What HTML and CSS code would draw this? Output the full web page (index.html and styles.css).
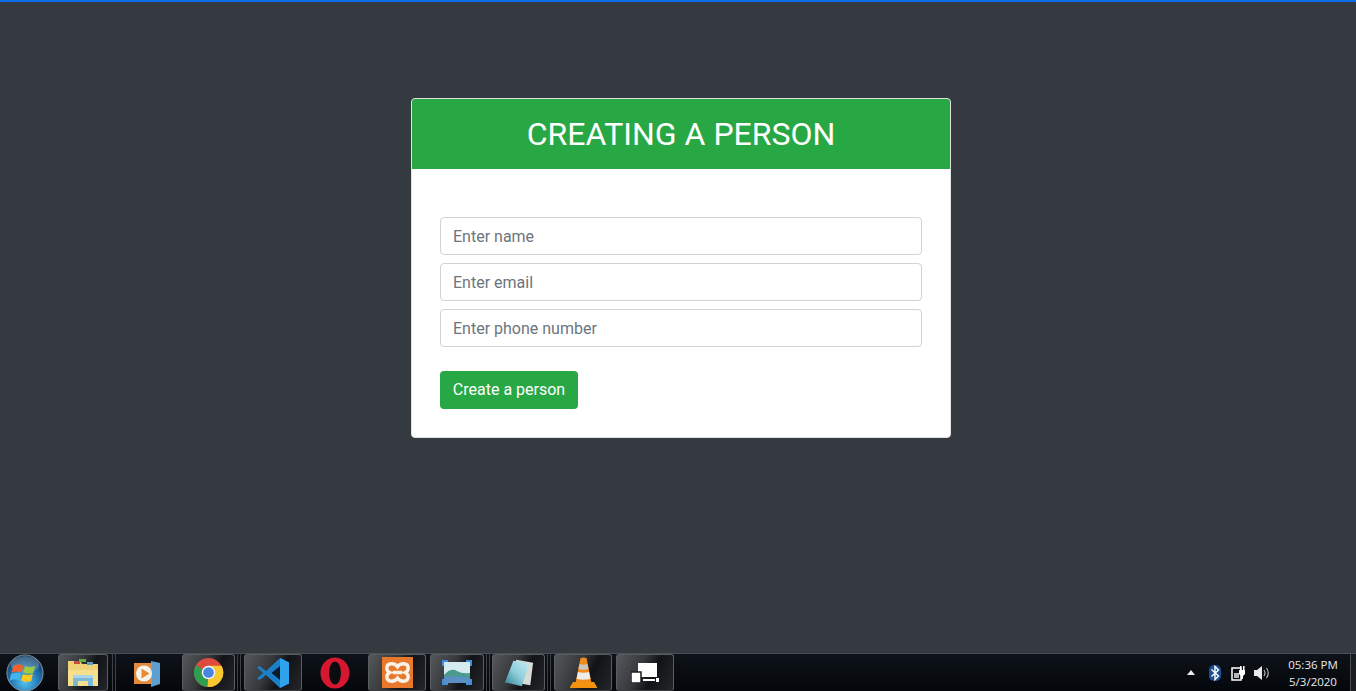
FILE: index.html
```html
<!DOCTYPE html>
<html lang="en">
<head>
    <meta charset="UTF-8">
    <meta name="viewport" content="width=device-width, initial-scale=1.0">
    <title>Creating a person</title>
    <link rel="stylesheet" href="styles.css">
</head>
<body>
    <div class="top-line"></div>

    <main class="page">
        <div class="card">
            <h1 class="card-header">CREATING A PERSON</h1>
            <form class="card-body">
                <input class="field" type="text" placeholder="Enter name">
                <input class="field" type="email" placeholder="Enter email">
                <input class="field" type="text" placeholder="Enter phone number">
                <button class="btn" type="button">Create a person</button>
            </form>
        </div>
    </main>

    <footer class="taskbar">
        <div class="start">
            <svg width="38" height="38" viewBox="0 0 40 40">
                <defs>
                    <radialGradient id="orb" cx="50%" cy="75%" r="75%">
                        <stop offset="0" stop-color="#58c4ec"/>
                        <stop offset="0.5" stop-color="#2478b8"/>
                        <stop offset="1" stop-color="#0a3054"/>
                    </radialGradient>
                </defs>
                <circle cx="20" cy="20" r="19" fill="url(#orb)" stroke="#8c9aa4" stroke-width="1"/>
                <ellipse cx="20" cy="11" rx="15" ry="9" fill="#fff" opacity="0.22"/>
                <g transform="translate(-2.500 -3) scale(1.12)">
                    <path d="M9 14q5-2.500 9.500-.5l-1.500 6.500q-5-2-9.500.5z" fill="#f0632c"/>
                    <path d="M20 14q4.500 2 9.500 0l-1.500 6.500q-5 1.500-9.500-.5z" fill="#9ccc3e"/>
                    <path d="M7 21.500q5-2.500 9.500-.5l-1.500 6.500q-5-2-9.500.5z" fill="#45b4ea"/>
                    <path d="M18 21.500q4.500 2 9.500 0l-1.500 6.500q-5 1.500-9.500-.5z" fill="#fcc81c"/>
                </g>
            </svg>
        </div>

        <div class="task w50">
            <svg width="34" height="30" viewBox="0 0 34 30">
                <path d="M2 7h30v21H2z" fill="#f6e08e"/>
                <path d="M2 3h12l2 3h16v6H2z" fill="#efd177"/>
                <path d="M8 3h6v3H8z" fill="#c94b3d"/>
                <path d="M13 1h7v3h-7z" fill="#6cab4a"/>
                <path d="M21 4h6v3h-6z" fill="#5d9ec9"/>
                <path d="M7 19h20v9h-5v-5H12v5H7z" fill="#7cb8d8"/>
                <path d="M7 17h20v3H7z" fill="#a8d6ea"/>
            </svg>
        </div>
        <div class="sep"></div>
        <div class="plain media">
            <svg width="26" height="27" viewBox="0 0 26 27">
                <path d="M17 1l9 2v21l-9 3z" fill="#5d9fd0"/>
                <path d="M0 3h18v21H0z" fill="#e38b3c"/>
                <circle cx="10" cy="13.500" r="8" fill="#f6f3ee"/>
                <path d="M7.500 8.500l8 5-8 5z" fill="#ea8a2d"/>
            </svg>
        </div>
        <div class="task w53 chrome">
            <svg width="31" height="31" viewBox="0 0 32 32">
                <circle cx="16" cy="16" r="15" fill="#dd4b3e"/>
                <path d="M16 16L3 8.500A15 15 0 0 0 16 31l7.500-13z" fill="#2f9e4f"/>
                <path d="M16 16l-1 15A15 15 0 0 0 29.500 9H16z" fill="#f7c92e"/>
                <circle cx="16" cy="16" r="7" fill="#f3f3f3"/>
                <circle cx="16" cy="16" r="5.500" fill="#4a86e0"/>
            </svg>
        </div>
        <div class="sep-thin"></div>
        <div class="task w58">
            <svg width="34" height="32" viewBox="0 0 34 32">
                <path d="M24 1l9 4.500v21L24 31 10 18l-6.500 5L1 21.500 7 16 1 10.500 3.500 9l6.500 5z" fill="#1b7fc8"/>
                <path d="M24 9l-8.500 7 8.500 7z" fill="#0b1a28"/>
                <path d="M24 1l9 4.500v21L24 31z" fill="#2ea3ec"/>
            </svg>
        </div>
        <div class="plain w66">
            <svg width="30" height="32" viewBox="0 0 30 32">
                <ellipse cx="15" cy="16" rx="14.500" ry="15.500" fill="#d5182f"/>
                <ellipse cx="15" cy="16" rx="6" ry="11.500" fill="#0a0c10"/>
            </svg>
        </div>
        <div class="task w58">
            <svg width="31" height="31" viewBox="0 0 32 32">
                <rect width="32" height="32" fill="#e8792c"/>
                <path d="M10 7q4 0 6 3 2-3 6-3 5 0 5 4.500 0 3-3 4.500 3 1.500 3 4.500 0 4.500-5 4.500-4 0-6-3-2 3-6 3-5 0-5-4.500 0-3 3-4.500-3-1.500-3-4.500Q5 7 10 7zM11 16h10" fill="none" stroke="#fbf3ea" stroke-width="3.500"/>
            </svg>
        </div>
        <div class="task w54 photo">
            <svg width="30" height="25" viewBox="0 0 30 25">
                <rect x="2" y="2" width="26" height="21" fill="#d6ebef"/>
                <path d="M2 15q7-8 13-4 5 3 13 2v10H2z" fill="#4a9a90"/>
                <path d="M2 17q12-2 26 1v5H2z" fill="#5c8fc4"/>
                <path d="M1 6V1h5M24 1h5v5M29 19v5h-5M6 24H1v-5" fill="none" stroke="#3f8fdc" stroke-width="2"/>
            </svg>
        </div>
        <div class="sep-thin narrow"></div>
        <div class="task w53">
            <svg width="32" height="32" viewBox="0 0 34 32">
                <defs>
                    <linearGradient id="pad" x1="0" y1="1" x2="1" y2="0">
                        <stop offset="0" stop-color="#2f7f8e"/>
                        <stop offset="0.5" stop-color="#8fd0dc"/>
                        <stop offset="1" stop-color="#c6ecf0"/>
                    </linearGradient>
                </defs>
                <path d="M14 2l18 3-3 24-17-3z" fill="#d7dcd6"/>
                <path d="M11 3l17 3-8 24-18-4z" fill="url(#pad)"/>
            </svg>
        </div>
        <div class="sep-thin"></div>
        <div class="task w58">
            <svg width="27" height="31" viewBox="0 0 27 31">
                <path d="M10.500 1q3-1 6 0l5 25h-16z" fill="#ef8c1a"/>
                <path d="M9.500 7q4 1.500 8 0l1 5q-5 1.500-10 0z" fill="#c9c7c2"/>
                <path d="M8 15q5.500 1.500 11 0l1.500 7q-7 1.500-14 0z" fill="#eeece8"/>
                <path d="M3 25h21l3 5v1H0v-1z" fill="#f39210"/>
            </svg>
        </div>
        <div class="task w58 remote">
            <svg width="28" height="20" viewBox="0 0 28 20">
                <path d="M7 0h19v14H7z" fill="#fff"/>
                <path d="M25 15h3v4h-3z" fill="#fff"/>
                <path d="M0 9h10v11H0z" fill="#fff" stroke="#1b1d20" stroke-width="1.500"/>
                <path d="M12 16h12v2H12z" fill="#fff"/>
            </svg>
        </div>

        <div class="tray">
            <svg class="tray-arrow" width="8" height="5" viewBox="0 0 8 5"><path d="M4 0l4 5H0z" fill="#e8eaec"/></svg>
            <svg class="tray-bt" width="12" height="16" viewBox="0 0 12 16">
                <rect width="12" height="16" rx="5" fill="#1c4f8f"/>
                <path d="M2.500 4.500l7 6.500L6 14.500v-13L9.500 5l-7 6.500" fill="none" stroke="#fff" stroke-width="1.400"/>
            </svg>
            <svg class="tray-power" width="15" height="16" viewBox="0 0 15 16">
                <path d="M1 3h9v12H1z" fill="none" stroke="#fff" stroke-width="1.500"/>
                <path d="M3 8h5v5H3z" fill="#b5b8ba"/>
                <path d="M8 5h6v4l-2 2v3h-2v-3L8 9zM9 1h1.500v4H9zM12 1h1.500v4H12z" fill="#fff"/>
            </svg>
            <svg class="tray-vol" width="16" height="14" viewBox="0 0 16 14">
                <path d="M0 4h3l5-4v14l-5-4H0z" fill="#e6e8ea"/>
                <path d="M10 4q2 3 0 6M12.500 2q3.500 5 0 10" fill="none" stroke="#aeb3b7" stroke-width="1.200"/>
            </svg>
            <div class="clock">
                <span>05:36 PM</span>
                <span>5/3/2020</span>
            </div>
            <div class="show-desktop"></div>
        </div>
    </footer>
</body>
</html>
```

FILE: styles.css
```css
* {
    box-sizing: border-box;
}
html, body {
    height: 100%;
}
body {
    margin: 0;
    display: flex;
    flex-direction: column;
    overflow: hidden;
    background-color: #343a40;
    font-family: Roboto, "Liberation Sans", sans-serif;
}
.top-line {
    height: 2px;
    flex: none;
    background-color: #0d6ee8;
}
.page {
    flex: 1;
    min-height: 0;
    display: flex;
    justify-content: center;
    align-items: flex-start;
    padding: 96px 0 0 6px;
}
.card {
    width: 540px;
    background: #fff;
    border: 1px solid #dfe1e3;
    border-radius: 4px;
}
.card-header {
    margin: 0;
    height: 70px;
    display: flex;
    align-items: center;
    justify-content: center;
    background-color: #28a745;
    color: #fff;
    font-size: 32px;
    font-weight: 400;
    border-radius: 3px 3px 0 0;
}
.card-body {
    padding: 48px 28px 28px;
    display: flex;
    flex-direction: column;
    gap: 8px;
}
.field {
    width: 100%;
    height: 38px;
    padding: 6px 12px;
    border: 1px solid #ced4da;
    border-radius: 4px;
    font-family: inherit;
    font-size: 16px;
    color: #495057;
}
.field::placeholder {
    color: #6c757d;
    opacity: 1;
}
.btn {
    align-self: flex-start;
    width: 138px;
    height: 38px;
    margin-top: 16px;
    padding: 0 0 2px;
    border: none;
    border-radius: 4px;
    background-color: #28a745;
    color: #fff;
    font-family: inherit;
    font-size: 16px;
    cursor: pointer;
}

/* taskbar */
.taskbar {
    flex: none;
    height: 38px;
    display: flex;
    align-items: stretch;
    background: linear-gradient(#0e1319, #04070c);
    border-top: 1px solid #4a4f55;
}
.start {
    width: 58px;
    flex: none;
    display: flex;
    align-items: center;
    padding-left: 6px;
}
.task, .plain {
    flex: none;
    display: flex;
    align-items: center;
    justify-content: center;
}
.task {
    border: 1px solid #5a5e62;
    border-bottom-color: #3a3d40;
    border-radius: 3px;
    background: linear-gradient(115deg, #55585b 0%, #36383b 40%, #111316 62%, #232528 100%);
}
.w50 { width: 50px; }
.w53 { width: 53px; }
.w54 { width: 54px; }
.w58 { width: 58px; }
.w66 { width: 66px; }
.sep, .sep-thin {
    flex: none;
    width: 4px;
    border-left: 1px solid #3d4146;
    border-right: 1px solid #3d4146;
}
.sep {
    margin: 0 14px 0 4px;
}
.sep-thin {
    margin: 0 3px 0 2px;
}
.sep-thin.narrow {
    margin-right: 2px;
}
.media {
    width: 48px;
    justify-content: flex-start;
    padding: 1px 0 0 4px;
}
.chrome,
.photo,
.remote {
    margin-left: 4px;
}
.tray {
    margin-left: auto;
    display: flex;
    align-items: center;
    color: #e8eaec;
}
.tray-arrow {
    margin-right: 14px;
}
.tray-bt {
    margin-right: 10px;
}
.tray-power {
    margin-right: 8px;
}
.tray-vol {
    margin-right: 13px;
}
.clock {
    width: 60px;
    padding-top: 1px;
    display: flex;
    flex-direction: column;
    align-items: center;
    font-family: "Open Sans", "Liberation Sans", sans-serif;
    font-size: 11.5px;
    line-height: 17px;
}
.show-desktop {
    width: 6px;
    height: 100%;
    margin-left: 7px;
    border-left: 1px solid #4a4f55;
    background-color: #181c21;
}
```
